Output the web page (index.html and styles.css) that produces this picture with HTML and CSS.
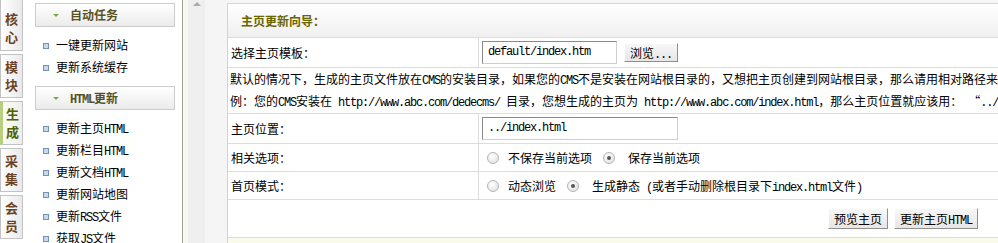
FILE: index.html
```html
<!DOCTYPE html>
<html lang="zh-CN">
<head>
    <meta charset="UTF-8">
    <title>更新主页HTML</title>
    <link rel="stylesheet" href="styles.css">
</head>
<body>
    <div class="frame">
        <div class="tabs">
            <div class="tab first">核<br>心</div>
            <div class="tab">模<br>块</div>
            <div class="tab active">生<br>成</div>
            <div class="tab">采<br>集</div>
            <div class="tab">会<br>员</div>
        </div>

        <div class="menu">
            <div class="menu-head"><span class="arrow"></span>自动任务</div>
            <ul class="menu-list">
                <li>一键更新网站</li>
                <li>更新系统缓存</li>
            </ul>
            <div class="menu-head"><span class="arrow"></span><span class="en">HTML</span>更新</div>
            <ul class="menu-list">
                <li>更新主页<span class="en">HTML</span></li>
                <li>更新栏目<span class="en">HTML</span></li>
                <li>更新文档<span class="en">HTML</span></li>
                <li>更新网站地图</li>
                <li>更新<span class="en">RSS</span>文件</li>
                <li>获取<span class="en">JS</span>文件</li>
            </ul>
        </div>

        <div class="gutter"><span class="up"></span></div>

        <div class="main">
            <div class="panel">
                <div class="panel-title">主页更新向导：</div>

                <div class="row">
                    <div class="label">选择主页模板：</div>
                    <div class="value">
                        <div class="input short">default/index.htm</div>
                        <span class="btn browse">浏览<span class="en">...</span></span>
                    </div>
                </div>

                <div class="row note">
                    <div class="note-text">
                        <p>默认的情况下，生成的主页文件放在<span class="en">CMS</span>的安装目录，如果您的<span class="en">CMS</span>不是安装在网站根目录的，又想把主页创建到网站根目录，那么请用相对路径来指定主页位置。</p>
                        <p>例：您的<span class="en">CMS</span>安装在<span class="en"> http://www.abc.com/dedecms/ </span>目录，您想生成的主页为<span class="en"> http://www.abc.com/index.html</span>，那么主页位置就应该用：<span class="en"> </span>“<span class="en">../index.html</span>”。</p>
                    </div>
                </div>

                <div class="row">
                    <div class="label">主页位置：</div>
                    <div class="value">
                        <div class="input long">../index.html</div>
                    </div>
                </div>

                <div class="row low">
                    <div class="label">相关选项：</div>
                    <div class="value">
                        <span class="radio"></span><span class="opt">不保存当前选项</span>
                        <span class="radio checked"></span><span class="opt wide">保存当前选项</span>
                    </div>
                </div>

                <div class="row low">
                    <div class="label">首页模式：</div>
                    <div class="value">
                        <span class="radio"></span><span class="opt">动态浏览</span>
                        <span class="radio checked"></span><span class="opt">生成静态<span class="en"> (</span>或者手动删除根目录下<span class="en">index.html</span>文件<span class="en">)</span></span>
                    </div>
                </div>

                <div class="row actions">
                    <span class="btn">预览主页</span>
                    <span class="btn">更新主页<span class="en">HTML</span></span>
                </div>

                <div class="foot"></div>
            </div>
        </div>
    </div>
</body>
</html>
```

FILE: styles.css
```css
body {
    margin: 0;
    font-family: "Noto Sans CJK SC", sans-serif;
    font-size: 12px;
    color: #000;
    background-color: #fff;
}
.frame {
    display: flex;
    width: 998px;
    height: 243px;
    overflow: hidden;
}
.en {
    font-family: "Liberation Mono", monospace;
    font-size: 12px;
    letter-spacing: -1.2px;
    white-space: pre;
}

/* left tabs */
.tabs {
    width: 25px;
    flex-shrink: 0;
}
.tab {
    box-sizing: border-box;
    width: 23px;
    height: 44px;
    margin-top: 3px;
    padding: 3px 0;
    border: 1px solid #c3c3c3;
    background: linear-gradient(to right, #ffffff, #e9e9e9);
    text-align: center;
    font-size: 13px;
    font-weight: bold;
    line-height: 18px;
    color: #6b4226;
}
.tab.first {
    height: 51px;
    margin-top: 0;
    padding-top: 10px;
    border-top: none;
}
.tab.active {
    border-left: 3px solid #b7cf80;
    color: #4f6300;
    background: linear-gradient(to right, #fbfbf5, #eeeeee);
}

/* menu */
.menu {
    width: 147px;
    flex-shrink: 0;
    padding: 3px 0 0 10px;
    border-right: 1px solid #a3a391;
}
.menu-head {
    box-sizing: border-box;
    width: 140px;
    height: 24px;
    border: 1px solid #cccccc;
    background: linear-gradient(#ffffff, #ebebeb);
    line-height: 22px;
    font-weight: bold;
    color: #57531f;
    white-space: nowrap;
}
.menu-head .en {
    font-weight: bold;
}
.arrow {
    display: inline-block;
    vertical-align: middle;
    width: 0;
    height: 0;
    margin: 0 11px 2px 17px;
    border-left: 3px solid transparent;
    border-right: 3px solid transparent;
    border-top: 3px solid #76ad46;
}
.menu-list {
    list-style: none;
    margin: 0;
    padding: 7px 0 8px 8px;
}
.menu-list li {
    height: 22px;
    line-height: 22px;
    white-space: nowrap;
}
.menu-list li::before {
    content: "";
    display: inline-block;
    vertical-align: middle;
    box-sizing: border-box;
    width: 6px;
    height: 6px;
    margin: 0 7px 2px 0;
    border: 1px solid #7291b3;
    background-color: #c9d8ea;
}

/* scroll gutter */
.gutter {
    width: 44px;
    flex-shrink: 0;
    background: linear-gradient(to right, #f7f7f7 0 5px, #efefef 5px 22px, #f5f5f5 22px);
}
.up {
    display: block;
    width: 0;
    height: 0;
    margin: 2px 0 0 10px;
    border-left: 4px solid transparent;
    border-right: 4px solid transparent;
    border-bottom: 4px solid #ababab;
}

/* main */
.main {
    flex: 1;
    min-width: 0;
    padding-top: 3px;
    background-color: #f6f6f6;
}
.panel {
    background-color: #fff;
    border-top: 1px solid #d6d6d6;
    border-left: 1px solid #d2d2d2;
}
.panel-title {
    box-sizing: border-box;
    height: 34px;
    padding-left: 13px;
    border-bottom: 1px solid #dddddd;
    background: linear-gradient(#ffffff, #efefef);
    line-height: 33px;
    font-weight: bold;
    color: #6b6500;
}
.row {
    box-sizing: border-box;
    display: grid;
    grid-template-columns: 251px 1fr;
    height: 30px;
    border-bottom: 1px solid #dddddd;
}
.row.low {
    height: 28px;
}
.label {
    display: flex;
    align-items: center;
    padding-left: 3px;
    border-right: 1px solid #dddddd;
}
.value {
    display: flex;
    align-items: center;
    padding-left: 3px;
    white-space: nowrap;
}
.input {
    box-sizing: border-box;
    height: 23px;
    padding-left: 5px;
    border: 1px solid;
    border-color: #8a8a8a #cfcfcf #cfcfcf #8a8a8a;
    line-height: 21px;
    font-family: "Liberation Mono", monospace;
    font-size: 12px;
    letter-spacing: -1.2px;
}
.input.short {
    width: 135px;
}
.input.long {
    width: 196px;
}
.btn {
    box-sizing: border-box;
    display: inline-block;
    height: 21px;
    line-height: 19px;
    padding: 0 5px;
    border: 1px solid;
    border-color: #ffffff #8f8f8f #8f8f8f #ffffff;
    background: linear-gradient(#f7f7f7, #e6e6e6);
    white-space: nowrap;
}
.btn.browse {
    height: 19px;
    line-height: 17px;
    margin-left: 7px;
}
.note {
    display: block;
    height: 46px;
}
.note-text {
    padding: 1px 0 0 2px;
    white-space: nowrap;
    overflow: hidden;
    line-height: 20px;
}
.note-text p {
    margin: 0;
}
.radio {
    box-sizing: border-box;
    width: 12px;
    height: 12px;
    margin: 0 9px 0 5px;
    border: 1px solid #b4b4b4;
    border-radius: 50%;
    background: radial-gradient(circle at 40% 35%, #ffffff, #dcdcdc);
    display: inline-flex;
    align-items: center;
    justify-content: center;
}
.radio.checked::after {
    content: "";
    width: 4px;
    height: 4px;
    border-radius: 50%;
    background-color: #555;
}
.radio.checked {
    margin-right: 13px;
}
.opt {
    margin-right: 6px;
}
.opt.wide {
    margin-right: 0;
}
.actions {
    display: flex;
    justify-content: flex-end;
    align-items: center;
    gap: 6px;
    height: 38px;
    padding-right: 20px;
}
.foot {
    height: 10px;
    background-color: #fafaea;
}
```
